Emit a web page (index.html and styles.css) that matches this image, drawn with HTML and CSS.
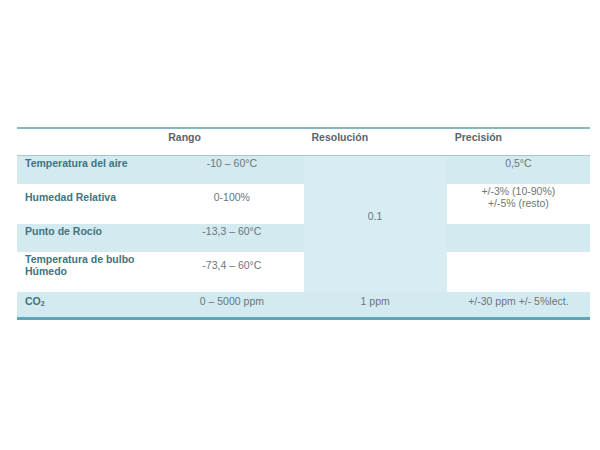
FILE: index.html
```html
<!DOCTYPE html>
<html lang="es">
<head>
<meta charset="utf-8">
<title>Especificaciones</title>
<link rel="stylesheet" href="styles.css">
</head>
<body>
<div class="page">
  <table class="spec">
    <colgroup>
      <col class="c"><col class="c"><col class="c"><col class="c">
    </colgroup>
    <thead>
      <tr class="head">
        <th></th>
        <th>Rango</th>
        <th>Resolución</th>
        <th>Precisión</th>
      </tr>
    </thead>
    <tbody>
      <tr class="r1">
        <td class="label blue">Temperatura del aire</td>
        <td class="val blue">-10 – 60°C</td>
        <td class="val res" rowspan="4">0.1</td>
        <td class="val blue">0,5°C</td>
      </tr>
      <tr class="r2">
        <td class="label">Humedad Relativa</td>
        <td class="val">0-100%</td>
        <td class="val">+/-3% (10-90%)<br>+/-5% (resto)</td>
      </tr>
      <tr class="r3">
        <td class="label blue">Punto de Rocío</td>
        <td class="val blue">-13,3 – 60°C</td>
        <td class="val blue"></td>
      </tr>
      <tr class="r4">
        <td class="label">Temperatura de bulbo<br>Húmedo</td>
        <td class="val">-73,4 – 60°C</td>
        <td class="val"></td>
      </tr>
      <tr class="r5">
        <td class="label blue">CO<span class="sub">2</span></td>
        <td class="val blue">0 – 5000 ppm</td>
        <td class="val blue">1 ppm</td>
        <td class="val blue">+/-30 ppm +/- 5%lect.</td>
      </tr>
    </tbody>
  </table>
</div>
</body>
</html>
```

FILE: styles.css
```css
html, body {
  margin: 0;
  padding: 0;
  background: #ffffff;
}

.page {
  padding: 127px 10px 0 17px;
  font-family: "Liberation Sans", Arial, sans-serif;
  font-size: 10.5px;
}

.spec {
  width: 573px;
  border-collapse: collapse;
  table-layout: fixed;
  border-top: 2px solid #86b6be;
  border-bottom: 3px solid #5fa6b6;
}

.spec .c {
  width: 25%;
}

.spec th,
.spec td {
  padding: 0 8px;
  line-height: 12px;
}

.head th {
  height: 24px;
  text-align: left;
  vertical-align: top;
  padding-top: 2px;
  font-weight: bold;
  color: #56666c;
  border-bottom: 1px solid #a8c7cd;
}

.label {
  font-weight: bold;
  color: #3f7482;
  text-align: left;
}

.val {
  color: #6d7578;
  text-align: center;
}

.blue {
  background: #d3eaf0;
}

.res {
  background: #d7edf3;
  vertical-align: middle;
  padding-bottom: 14px;
}

.r1 td, .r2 td, .r3 td, .r4 td {
  vertical-align: middle;
  padding-top: 1px;
  padding-bottom: 15px;
}

.r1 td.res {
  padding-bottom: 16px;
  padding-top: 0;
}

.r1 { height: 28px; }
.r2 { height: 40px; }
.r3 { height: 28px; }
.r4 { height: 40px; }

.r5 td {
  height: 26px;
  vertical-align: top;
  padding-top: 3px;
  padding-bottom: 0;
  box-sizing: border-box;
}

.sub {
  font-size: 7px;
  vertical-align: -1px;
}
```
